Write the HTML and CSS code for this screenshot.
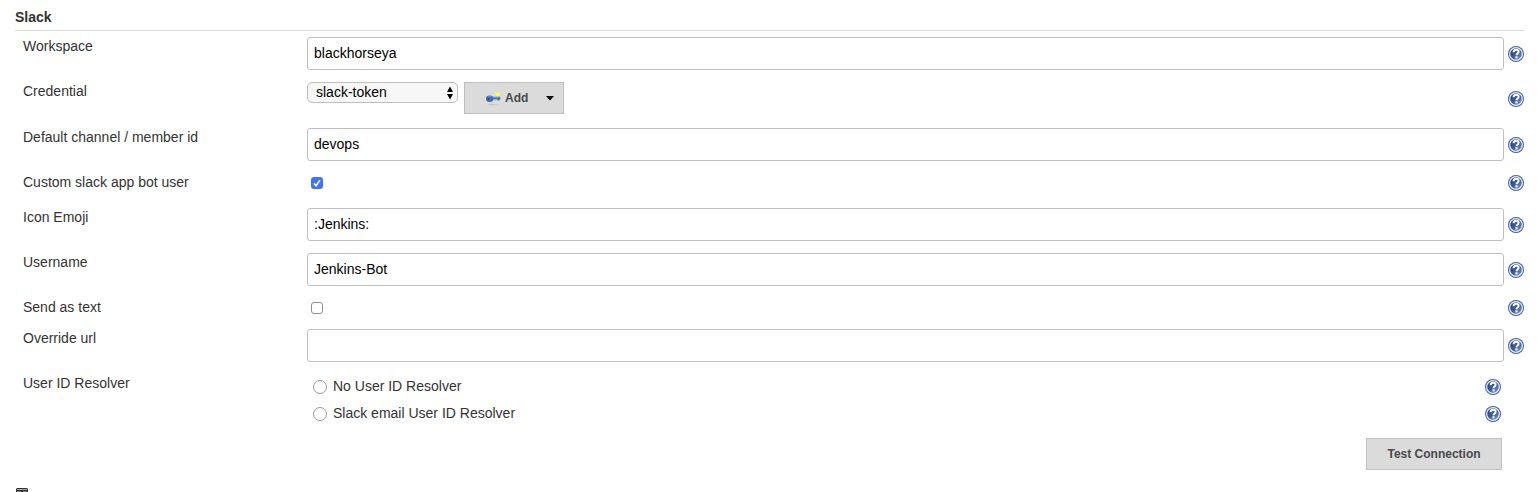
FILE: index.html
```html
<!DOCTYPE html>
<html lang="en">
<head>
<meta charset="utf-8">
<title>Slack configuration</title>
<link rel="stylesheet" href="styles.css">
</head>
<body>
<svg class="defs" width="0" height="0" aria-hidden="true">
  <defs>
    <linearGradient id="blue" x1="0" y1="0" x2="1" y2="1">
      <stop offset="0" stop-color="#1e3a7c"/><stop offset=".5" stop-color="#3c5b9c"/><stop offset="1" stop-color="#8ba2cf"/>
    </linearGradient>
    <symbol id="help" viewBox="0 0 16 16">
      <circle cx="8" cy="8" r="8" fill="#45609c"/>
      <circle cx="8" cy="8" r="6.4" fill="url(#blue)" stroke="#e9eef8" stroke-width="1.2"/>
      <path d="M5.6 6.2C5.6 4.5 6.6 3.7 8.1 3.7c1.5 0 2.5.9 2.5 2.1 0 1.7-2.1 1.7-2.1 3.5" fill="none" stroke="#fff" stroke-width="2"/>
      <path d="M7.4 10.3h2.2v2.1H7.4z" fill="#fff"/>
    </symbol>
  </defs>
</svg>
<main class="config">
  <h1 class="section-title">Slack</h1>
  <div class="row">
    <label class="label">Workspace</label>
    <input class="text" type="text" value="blackhorseya">
    <svg class="help"><use href="#help"/></svg>
  </div>
  <div class="row row-credential">
    <label class="label">Credential</label>
    <div class="credential">
      <div class="select"><span>slack-token</span>
        <svg class="arrows" viewBox="0 0 8 14"><path d="M4 .5 7 6H1zM1 8h6l-3 5.5z"/></svg>
      </div>
      <button class="button add">
        <svg class="key" viewBox="0 0 16 16">
          <ellipse cx="7.5" cy="14.6" rx="5.5" ry=".7" fill="#c3c3c3"/>
          <circle cx="12.6" cy="4.4" r="2.7" fill="#f5ef62"/>
          <circle cx="12.6" cy="4.4" r="1.2" fill="#fff99a"/>
          <path d="M6 6.8h9.3v2.6h-1v1h-1.8v-1H6z" fill="#4a70b4"/>
          <ellipse cx="4.7" cy="8.7" rx="3.7" ry="3.3" fill="#456aae"/>
          <path d="M3.3 6.7h3M7.5 7.5h7" stroke="#7d9bd0" stroke-width=".9"/>
          <circle cx="3.2" cy="8.9" r=".8" fill="#263f78"/>
        </svg>
        <span>Add</span>
        <svg class="caret" viewBox="0 0 8 5"><path d="M0 0h8L4 4.5z"/></svg>
      </button>
    </div>
    <svg class="help"><use href="#help"/></svg>
  </div>
  <div class="row">
    <label class="label">Default channel / member id</label>
    <input class="text" type="text" value="devops">
    <svg class="help"><use href="#help"/></svg>
  </div>
  <div class="row row-check">
    <label class="label">Custom slack app bot user</label>
    <span class="check checked"><svg viewBox="0 0 12 12"><path d="M3 6.4 5.1 8.7 9 3.1"/></svg></span>
    <svg class="help"><use href="#help"/></svg>
  </div>
  <div class="row">
    <label class="label">Icon Emoji</label>
    <input class="text" type="text" value=":Jenkins:">
    <svg class="help"><use href="#help"/></svg>
  </div>
  <div class="row">
    <label class="label">Username</label>
    <input class="text" type="text" value="Jenkins-Bot">
    <svg class="help"><use href="#help"/></svg>
  </div>
  <div class="row row-check row-short">
    <label class="label">Send as text</label>
    <span class="check"></span>
    <svg class="help"><use href="#help"/></svg>
  </div>
  <div class="row">
    <label class="label">Override url</label>
    <input class="text" type="text" value="">
    <svg class="help"><use href="#help"/></svg>
  </div>
  <div class="row row-resolver">
    <label class="label">User ID Resolver</label>
    <div class="options">
      <div class="option"><span class="radio"></span><span>No User ID Resolver</span><svg class="help"><use href="#help"/></svg></div>
      <div class="option"><span class="radio"></span><span>Slack email User ID Resolver</span><svg class="help"><use href="#help"/></svg></div>
    </div>
  </div>
  <div class="actions"><button class="button test">Test Connection</button></div>
  <svg class="next-icon" viewBox="0 0 12 16"><path d="M1 0h10l1 1v15H0V1z" fill="#333"/><path d="M1 1.5h10" stroke="#aaa"/><path d="M1 3.5h4M7 3.5h4" stroke="#777"/></svg>
</main>
</body>
</html>
```
FILE: styles.css
```css
* { box-sizing: border-box; }
html, body { height: 100%; overflow: hidden; }
body {
  margin: 0;
  background: #fff;
  color: #333;
  font: 14px/18px "Liberation Sans", Arial, sans-serif;
}
.defs { position: absolute; }
.config { padding: 8px 13px 0 15px; }
.section-title {
  height: 23px;
  margin: 0 0 6px;
  border-bottom: 1px solid #d9d9d9;
  font-size: 14px;
  line-height: 18px;
}
.row {
  display: grid;
  grid-template-columns: 280px 1197px 16px;
  column-gap: 4px;
  align-items: start;
  height: 45px;
  padding-left: 8px;
}
.row-credential { height: 46px; }
.row-check { height: 35px; }
.row-short { height: 31px; }
.row-resolver { height: 64px; }
.help { display: block; width: 16px; height: 16px; margin-top: 9px; }
.row-check .help { margin-top: 2px; }
.text {
  width: 100%;
  height: 33px;
  padding: 0 6px 1px;
  border: 1px solid #bfbfbf;
  border-radius: 3px;
  color: #000;
  font: inherit;
  outline: none;
}
.credential { display: flex; align-items: flex-start; gap: 6px; }
.select {
  display: flex;
  align-items: flex-start;
  justify-content: space-between;
  width: 151px;
  height: 21px;
  padding: 0 3px 0 8px;
  border: 1px solid #bebebe;
  border-radius: 5px;
  background: #f7f7f7;
  color: #000;
}
.arrows { width: 8px; height: 14px; margin-top: 3px; }
.button {
  height: 32px;
  padding: 0;
  border: 1px solid #bfbfbf;
  background: #dbdbdb;
  color: #4a4a4a;
  font: bold 12px/18px "Liberation Sans", Arial, sans-serif;
}
.add { display: flex; align-items: center; width: 100px; padding-left: 20px; }
.key { width: 16px; height: 16px; margin-right: 4px; }
.caret { width: 8px; height: 5px; margin-left: 18px; }
.check {
  width: 12px;
  height: 12px;
  margin: 4px 0 0 4px;
  border: 1px solid #8f8f8f;
  border-radius: 3px;
}
.checked { border: 0; background: #4474f5; }
.checked svg { display: block; fill: none; stroke: #fff; stroke-width: 1.6; }
.options { padding: 3px 3px 0 6px; }
.option { display: flex; align-items: flex-start; height: 27px; }
.option .help { margin: 2px 0 0 auto; }
.radio {
  width: 14px;
  height: 14px;
  margin: 3px 6px 0 0;
  border: 1px solid #999;
  border-radius: 50%;
}
.actions { display: flex; justify-content: flex-end; padding-right: 22px; }
.test { width: 136px; }
.next-icon { display: block; width: 12px; height: 16px; margin: 18px 0 0 1px; }
```
